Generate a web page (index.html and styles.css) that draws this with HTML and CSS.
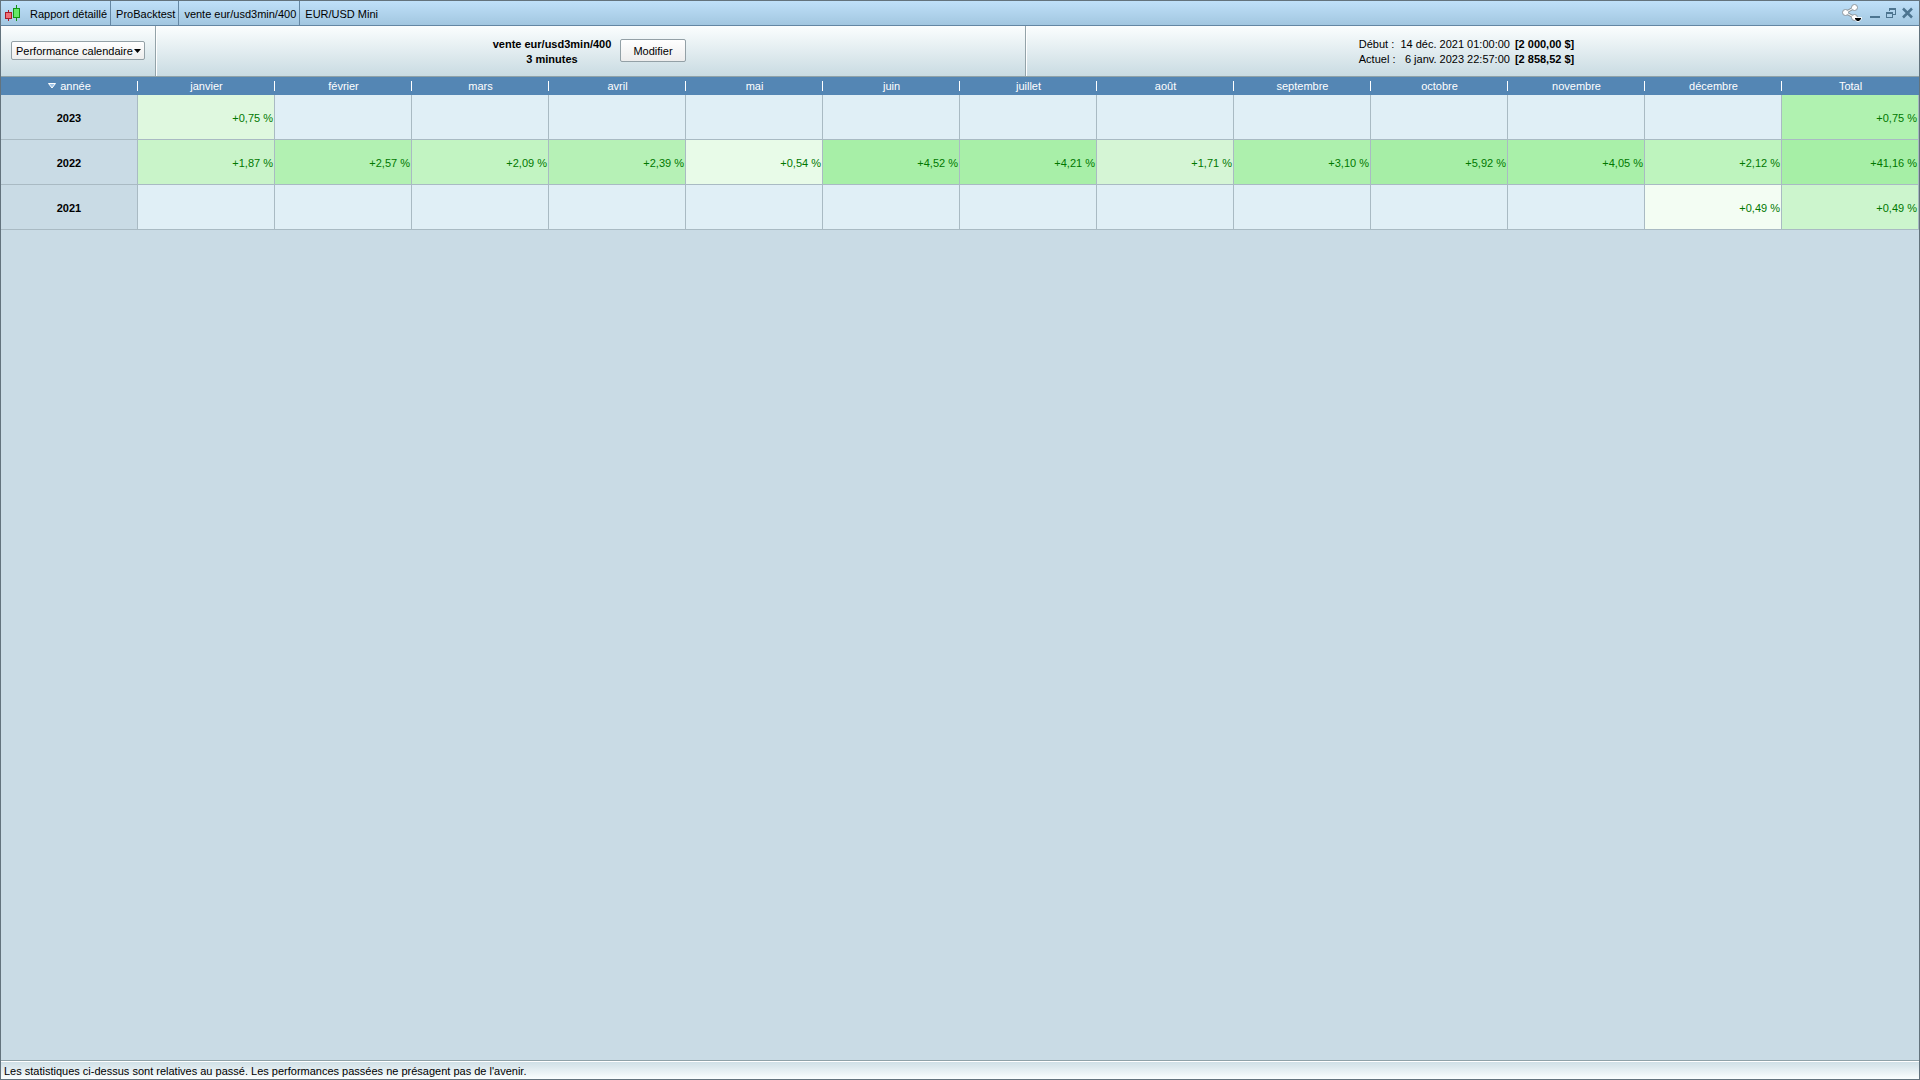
FILE: index.html
```html
<!DOCTYPE html>
<html lang="fr">
<head>
  <meta charset="UTF-8" />
  <meta name="viewport" content="width=device-width, initial-scale=1.0"/>
  <title>Rapport détaillé</title>
  <link rel="stylesheet" href="styles.css">
</head>
<body>
  <header class="titlebar">
    <svg class="app-icon" width="16" height="16" viewBox="0 0 16 16" aria-hidden="true" shape-rendering="crispEdges">
      <path d="M3.500 5v11" stroke="#a81c28"/>
      <rect x="0.500" y="7.500" width="6" height="6" fill="#f07078" stroke="#a81c28"/>
      <path d="M11.500 0v16" stroke="#149414"/>
      <rect x="8.500" y="3.500" width="6" height="9" fill="#66e866" stroke="#149414"/>
    </svg>
    <ul class="crumbs">
      <li>Rapport détaillé</li>
      <li>ProBacktest</li>
      <li>vente eur/usd3min/400</li>
      <li>EUR/USD Mini</li>
    </ul>
    <div class="window-buttons">
      <button class="share" type="button" aria-label="Partager">
        <svg width="22" height="20" viewBox="0 0 22 20">
          <path d="M12.500 4.500L3.500 9.500l9 5" fill="none" stroke="#8d979e" stroke-width="3"/>
          <circle cx="12.500" cy="4.500" r="3" fill="#fff" stroke="#8d979e"/>
          <circle cx="3.500" cy="9.500" r="3" fill="#fff" stroke="#8d979e"/>
          <circle cx="12.500" cy="14.500" r="3" fill="#fff" stroke="#8d979e"/>
          <path d="M12.500 4.500L3.500 9.500l9 5" fill="none" stroke="#fff"/>
          <path d="M12 14h8v2l-3 3h-2l-3-3z" fill="#fff" opacity="0.8"/>
          <path d="M13 15h6v1l-2 2h-2l-2-2z" fill="#000"/>
        </svg>
      </button>
      <button type="button" aria-label="Réduire">
        <svg width="10" height="12" viewBox="0 0 10 12"><path d="M0 10h10" stroke="#4d7590" stroke-width="2"/></svg>
      </button>
      <button type="button" aria-label="Restaurer">
        <svg width="10" height="12" viewBox="0 0 10 12" fill="none" stroke="#4d7590" shape-rendering="crispEdges">
          <path d="M3.500 4V1.500h6V7.500H7M3 2.500h7"/>
          <rect x="0.500" y="5.500" width="6" height="5"/>
          <path d="M0 6.500h7"/>
        </svg>
      </button>
      <button type="button" aria-label="Fermer">
        <svg width="11" height="12" viewBox="0 0 11 12"><path d="M1 1.500l9 9M10 1.500l-9 9" stroke="#4d7590" stroke-width="2.500"/></svg>
      </button>
    </div>
  </header>

  <section class="toolbar">
    <div class="panel panel-view">
      <div class="select-box">
        <select aria-label="Vue du rapport">
          <option>Performance calendaire</option>
        </select>
        <svg width="7" height="4" viewBox="0 0 7 4" aria-hidden="true"><path d="M0 0h7L3.500 4z"/></svg>
      </div>
    </div>
    <div class="panel panel-name">
      <h1>vente eur/usd3min/400<br>3 minutes</h1>
      <button class="edit" type="button">Modifier</button>
    </div>
    <div class="panel panel-dates">
      <dl class="dates">
        <dt>Début :</dt><dd>14 déc. 2021 01:00:00</dd><dd><b>[2 000,00 $]</b></dd>
        <dt>Actuel :</dt><dd>6 janv. 2023 22:57:00</dd><dd><b>[2 858,52 $]</b></dd>
      </dl>
    </div>
  </section>

  <main>
    <table class="calendar">
      <thead>
        <tr>
          <th scope="col" aria-sort="descending"><button class="sort" type="button"><svg width="8" height="6" viewBox="0 0 8 6" aria-hidden="true"><path d="M0.500 0.500h7L4 5z" fill="#9cc4e8" stroke="#fff"/></svg>année</button></th>
          <th scope="col">janvier</th>
          <th scope="col">février</th>
          <th scope="col">mars</th>
          <th scope="col">avril</th>
          <th scope="col">mai</th>
          <th scope="col">juin</th>
          <th scope="col">juillet</th>
          <th scope="col">août</th>
          <th scope="col">septembre</th>
          <th scope="col">octobre</th>
          <th scope="col">novembre</th>
          <th scope="col">décembre</th>
          <th scope="col">Total</th>
        </tr>
      </thead>
      <tbody>
        <tr>
          <th scope="row">2023</th>
          <td style="background: #dff8df">+0,75 %</td>
          <td></td><td></td><td></td><td></td><td></td><td></td><td></td><td></td><td></td><td></td><td></td>
          <td style="background: #b0f2b0">+0,75 %</td>
        </tr>
        <tr>
          <th scope="row">2022</th>
          <td style="background: #c9f4c9">+1,87 %</td>
          <td style="background: #b2f1b2">+2,57 %</td>
          <td style="background: #c2f4c2">+2,09 %</td>
          <td style="background: #b6f1b6">+2,39 %</td>
          <td style="background: #e8fbe8">+0,54 %</td>
          <td style="background: #a7efa7">+4,52 %</td>
          <td style="background: #a8efa8">+4,21 %</td>
          <td style="background: #d5f5d5">+1,71 %</td>
          <td style="background: #adf0ad">+3,10 %</td>
          <td style="background: #a6eea6">+5,92 %</td>
          <td style="background: #a9f0a9">+4,05 %</td>
          <td style="background: #bef4be">+2,12 %</td>
          <td style="background: #a6efa6">+41,16 %</td>
        </tr>
        <tr>
          <th scope="row">2021</th>
          <td></td><td></td><td></td><td></td><td></td><td></td><td></td><td></td><td></td><td></td><td></td>
          <td style="background: #f3fdf3">+0,49 %</td>
          <td style="background: #ccf5cd">+0,49 %</td>
        </tr>
      </tbody>
    </table>
  </main>

  <footer class="statusbar">Les statistiques ci-dessus sont relatives au passé. Les performances passées ne présagent pas de l'avenir.</footer>
</body>
</html>
```

FILE: styles.css
```css
* {
  margin: 0;
  padding: 0;
  box-sizing: border-box;
}

body {
  min-height: 100vh;
  display: flex;
  flex-direction: column;
  border: 1px solid #63737d;
  background: #c9dbe5;
  color: #000;
  font: 11px/15px "Liberation Sans", Arial, sans-serif;
}

button, select {
  font: inherit;
  color: inherit;
}

svg {
  display: block;
}

/* Title bar */
.titlebar {
  display: flex;
  height: 25px;
  align-items: center;
  background: linear-gradient(#bfe0f9, #a2c7e0);
  border-bottom: 1px solid #6487a3;
}

.app-icon {
  margin-left: 4px;
}

.crumbs {
  display: flex;
  align-self: stretch;
  list-style: none;
  margin-left: 4px;
}

.crumbs li {
  padding: 0 3px 0 5px;
  line-height: 26px;
  border-right: 1px solid #6487a3;
}

.crumbs li:last-child {
  border-right: none;
}

.window-buttons {
  display: flex;
  align-items: center;
  gap: 6px;
  margin-left: auto;
  padding-right: 6px;
}

.window-buttons button {
  background: none;
  border: none;
}

/* Toolbar */
.toolbar {
  display: flex;
  height: 51px;
  background: linear-gradient(#fbfefe, #c9dbe2);
  border-bottom: 1px solid #8fa2a8;
}

.panel {
  display: flex;
  align-items: center;
  justify-content: center;
  padding-bottom: 1px;
  border-right: 1px solid #93a3a9;
  box-shadow: 1px 0 #fff;
}

.panel:last-child {
  border-right: none;
  box-shadow: none;
}

.panel-view {
  flex: 0 0 155px;
  justify-content: flex-start;
  padding-left: 10px;
}

.panel-name {
  flex: 863;
  gap: 5px;
  padding-right: 6px;
}

.panel-dates {
  flex: 881;
  padding-right: 12px;
}

.select-box {
  position: relative;
}

.select-box select {
  display: block;
  appearance: none;
  width: 134px;
  height: 19px;
  padding: 2px 4px 0;
  border: 1px solid #93a0a6;
  border-radius: 2px;
  background: linear-gradient(#fff, #ededed);
}

.select-box svg {
  position: absolute;
  right: 4px;
  top: 8px;
  pointer-events: none;
}

h1 {
  min-width: 126px;
  padding-top: 3px;
  font-size: 11px;
  text-align: center;
}

.edit {
  width: 66px;
  height: 23px;
  padding-top: 2px;
  border: 1px solid #93a0a6;
  border-radius: 2px;
  background: linear-gradient(#fff, #ededed);
}

.dates {
  display: grid;
  grid-template-columns: auto auto auto;
  column-gap: 5px;
  padding-top: 3px;
}

.dates dd {
  text-align: right;
}

/* Calendar */
main {
  flex: 1;
}

.calendar {
  width: 100%;
  table-layout: fixed;
  border-collapse: separate;
  border-spacing: 0;
}

.calendar thead th {
  height: 18px;
  background: linear-gradient(#fff, #fff) right center / 1px 10px no-repeat #5486b4;
  color: #fff;
  font-weight: normal;
}

.calendar thead th:last-child {
  background: #5486b4;
}

.sort {
  display: flex;
  align-items: center;
  justify-content: center;
  gap: 4px;
  width: 100%;
  background: none;
  border: none;
}

.calendar tbody th,
.calendar td {
  height: 45px;
  padding-top: 2px;
  border-right: 1px solid #a9bac3;
  border-bottom: 1px solid #a9bac3;
}

.calendar td {
  padding-right: 1px;
  background: #e0eff6;
  color: #007800;
  text-align: right;
}

/* Status bar */
.statusbar {
  height: 19px;
  padding-left: 3px;
  border-top: 1px solid #8fa2a8;
  box-shadow: inset 0 1px #fff;
  background: linear-gradient(#cddee5, #fbfefe);
  line-height: 20px;
}
```
